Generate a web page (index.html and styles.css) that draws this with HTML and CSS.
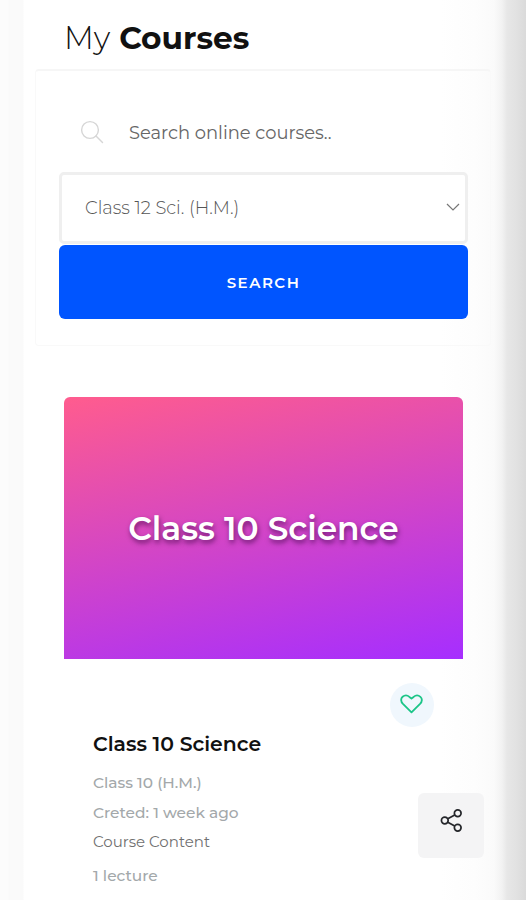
FILE: index.html
```
<!DOCTYPE html>
<html lang="en">
<head>
    <meta charset="UTF-8">
    <meta name="viewport" content="width=device-width, initial-scale=1.0">
    <title>My Courses</title>
    <link rel="stylesheet" href="styles.css">
</head>
<body>
    <header>
        <h1><span class="light">My</span> <span class="bold">Courses</span></h1>
    </header>
    <main>
        <form class="search-box">
            <label class="search-row">
                <svg class="search-icon" viewBox="0 0 24 24" fill="none" stroke="#d6d6d6" stroke-width="1.4" stroke-linecap="round">
                    <circle cx="10" cy="10" r="8.4"/>
                    <path d="M16 16l6.5 6.5"/>
                </svg>
                <span class="search-text">Search online courses..</span>
            </label>
            <div class="select">
                <span class="select-text">Class 12 Sci. (H.M.)</span>
                <svg class="arrow" viewBox="0 0 14 8" fill="none" stroke="#777" stroke-width="1.2">
                    <path d="M1 1l6 6 6-6"/>
                </svg>
            </div>
            <button type="button" class="search-button"><span>SEARCH</span></button>
        </form>

        <article class="course">
            <div class="cover"><span>Class 10 Science</span></div>
            <div class="course-body">
                <button type="button" class="like" aria-label="Like">
                    <svg viewBox="0 0 24 20" fill="none" stroke="#1cc588" stroke-width="1.9" stroke-linejoin="round">
                        <path d="M12 18.7L3.1 9.9C0.7 7.4 0.6 4.3 2.7 2.5C5 0.5 8 1 9.8 2.6L12 4.3L14.2 2.6C16 1 19 0.5 21.3 2.5C23.4 4.3 23.3 7.4 20.9 9.9Z"/>
                    </svg>
                </button>
                <h2><span>Class 10 Science</span></h2>
                <p class="class-name"><span>Class 10 (H.M.)</span></p>
                <p class="created"><span>Creted: 1 week ago</span></p>
                <p class="content"><span>Course Content</span></p>
                <p class="lectures"><span>1 lecture</span></p>
            </div>
        </article>
    </main>

    <button type="button" class="share" aria-label="Share">
        <svg viewBox="0 0 24 24" fill="none" stroke="#24262a" stroke-width="1.8">
            <circle cx="5" cy="12" r="3.5"/>
            <circle cx="18.5" cy="4.5" r="3.5"/>
            <circle cx="18.5" cy="19.5" r="3.5"/>
            <path d="M8.1 10.3l7.3-4.1M8.1 13.7l7.3 4.1"/>
        </svg>
    </button>
</body>
</html>
```
FILE: styles.css
```
* {
    box-sizing: border-box;
}
body {
    margin: 0;
    height: 900px;
    overflow: hidden;
    font-family: Montserrat, Inter, sans-serif;
    color: #111;
    background: linear-gradient(to right, #fcfcfc 0, #fcfcfc 8px, #fafafa 9px, #fafafa 23px, #fff 24px, #fff 440px, #fdfdfd 475px, #fafafa 494px, #f2f2f2 502px, #e7e7e7 507px, #e2e2e2 516px, #dadada 526px);
}
h1, h2, p {
    margin: 0;
}
button {
    border: none;
    font-family: inherit;
    padding: 0;
}
header {
    height: 69px;
    padding: 19px 0 0 64px;
}
h1 {
    font-size: 31.2px;
    line-height: 38px;
    white-space: nowrap;
}
.light {
    font-weight: 300;
}
.bold {
    font-weight: 700;
}
.search-box {
    width: 456px;
    height: 277px;
    margin-left: 35px;
    padding: 22px 22px 0 23px;
    border: 1px solid #f9f9f9;
    border-top: 2px solid #f6f6f6;
    border-radius: 4px;
}
.search-row {
    display: flex;
    align-items: center;
    height: 78px;
    padding-left: 21px;
}
.search-icon {
    width: 24px;
    height: 24px;
    margin-right: 25px;
}
.search-text {
    font-size: 17.9px;
    color: #666;
}
.select {
    display: flex;
    align-items: center;
    justify-content: space-between;
    height: 72px;
    margin: 1px 0;
    padding: 0 5px 2px 23px;
    background: #fff;
    border: 3px solid #efefef;
    border-radius: 5px;
}
.select-text {
    font-size: 17.9px;
    font-weight: 300;
    color: #555;
}
.arrow {
    width: 14px;
    height: 8px;
}
.search-button {
    display: block;
    width: 409px;
    height: 74px;
    background: #0055ff;
    color: #fff;
    border-radius: 6px;
    font-size: 15px;
    font-weight: 600;
    letter-spacing: 1.5px;
}
.course {
    width: 399px;
    margin: 51px 0 0 64px;
}
.cover {
    display: flex;
    align-items: center;
    justify-content: center;
    height: 262px;
    border-radius: 6px 6px 0 0;
    background: linear-gradient(168deg, #ff5c8e, #a62eff);
    color: #fff;
    font-size: 32.8px;
    font-weight: 600;
    text-shadow: 1px 3px 5px rgba(50, 0, 60, 0.6);
}
.course-body {
    display: flex;
    flex-direction: column;
    padding: 24px 29px 0 29px;
    white-space: nowrap;
}
.like {
    display: flex;
    align-items: center;
    justify-content: center;
    align-self: flex-end;
    width: 44px;
    height: 44px;
    border-radius: 50%;
    background: #f0f7fd;
}
.like svg {
    width: 23px;
    height: 20px;
    margin: -2px 1px 0 0;
}
h2 {
    margin-top: 4px;
    font-size: 20.4px;
    font-weight: 600;
    line-height: 26px;
}
.course-body p {
    font-size: 15.4px;
    font-weight: 500;
    line-height: 30px;
    color: #a3a8aa;
}
.course-body .class-name {
    margin-top: 11px;
}
.course-body .content {
    margin-top: -1px;
    font-size: 15px;
    font-weight: 400;
    color: #707070;
}
.course-body .lectures {
    margin-top: 4px;
}
.share {
    position: fixed;
    left: 418px;
    top: 793px;
    width: 66px;
    height: 65px;
    padding-bottom: 7px;
    border-radius: 6px;
    background: #f4f4f5;
}
.share svg {
    width: 23px;
    height: 25px;
}
```
